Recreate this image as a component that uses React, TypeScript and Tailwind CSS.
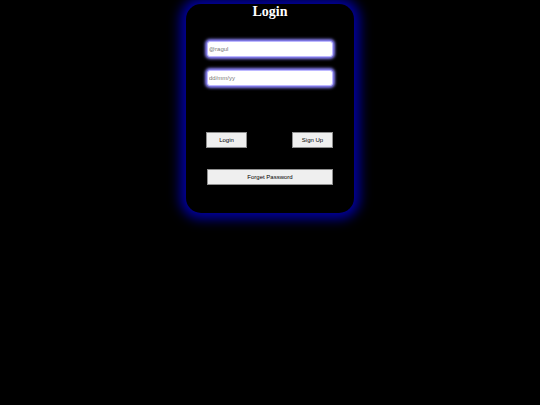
export default function App() {
  return (
    <div className="min-h-[405px] w-full bg-black pt-[4px] font-['Liberation_Sans',Arial,sans-serif]">
      <div className="mx-auto flex w-[168px] flex-col rounded-[15px] bg-black px-[21px] pb-[28px] shadow-[0_0_12px_6px_#0000a0]">
        <h1 className="text-center font-['Liberation_Serif','Times_New_Roman',serif] text-[14px] font-bold leading-[15px] text-white">
          Login
        </h1>
        <input
          placeholder="@ragul"
          className="mt-[22px] h-[16px] w-[126px] rounded-[3px] border border-[#bdb8ff] bg-white px-[1px] text-[6px] text-black shadow-[0_0_3px_2px_#8e86ff] outline-none placeholder:text-[#777]"
        />
        <input
          placeholder="dd/mm/yy"
          className="mt-[13px] h-[16px] w-[126px] rounded-[3px] border border-[#bdb8ff] bg-white px-[1px] text-[6px] text-black shadow-[0_0_3px_2px_#8e86ff] outline-none placeholder:text-[#777]"
        />
        <div className="ml-[-1px] mt-[46px] flex justify-between">
          <button className="h-[16px] w-[41px] border border-[#8f8f8f] bg-[#efefef] text-[6px] text-black">
            Login
          </button>
          <button className="h-[16px] w-[41px] border border-[#8f8f8f] bg-[#efefef] text-[6px] text-black">
            Sign Up
          </button>
        </div>
        <button className="mt-[21px] h-[16px] w-[126px] border border-[#8f8f8f] bg-[#efefef] text-[6px] text-black">
          Forget Password
        </button>
      </div>
    </div>
  );
}
